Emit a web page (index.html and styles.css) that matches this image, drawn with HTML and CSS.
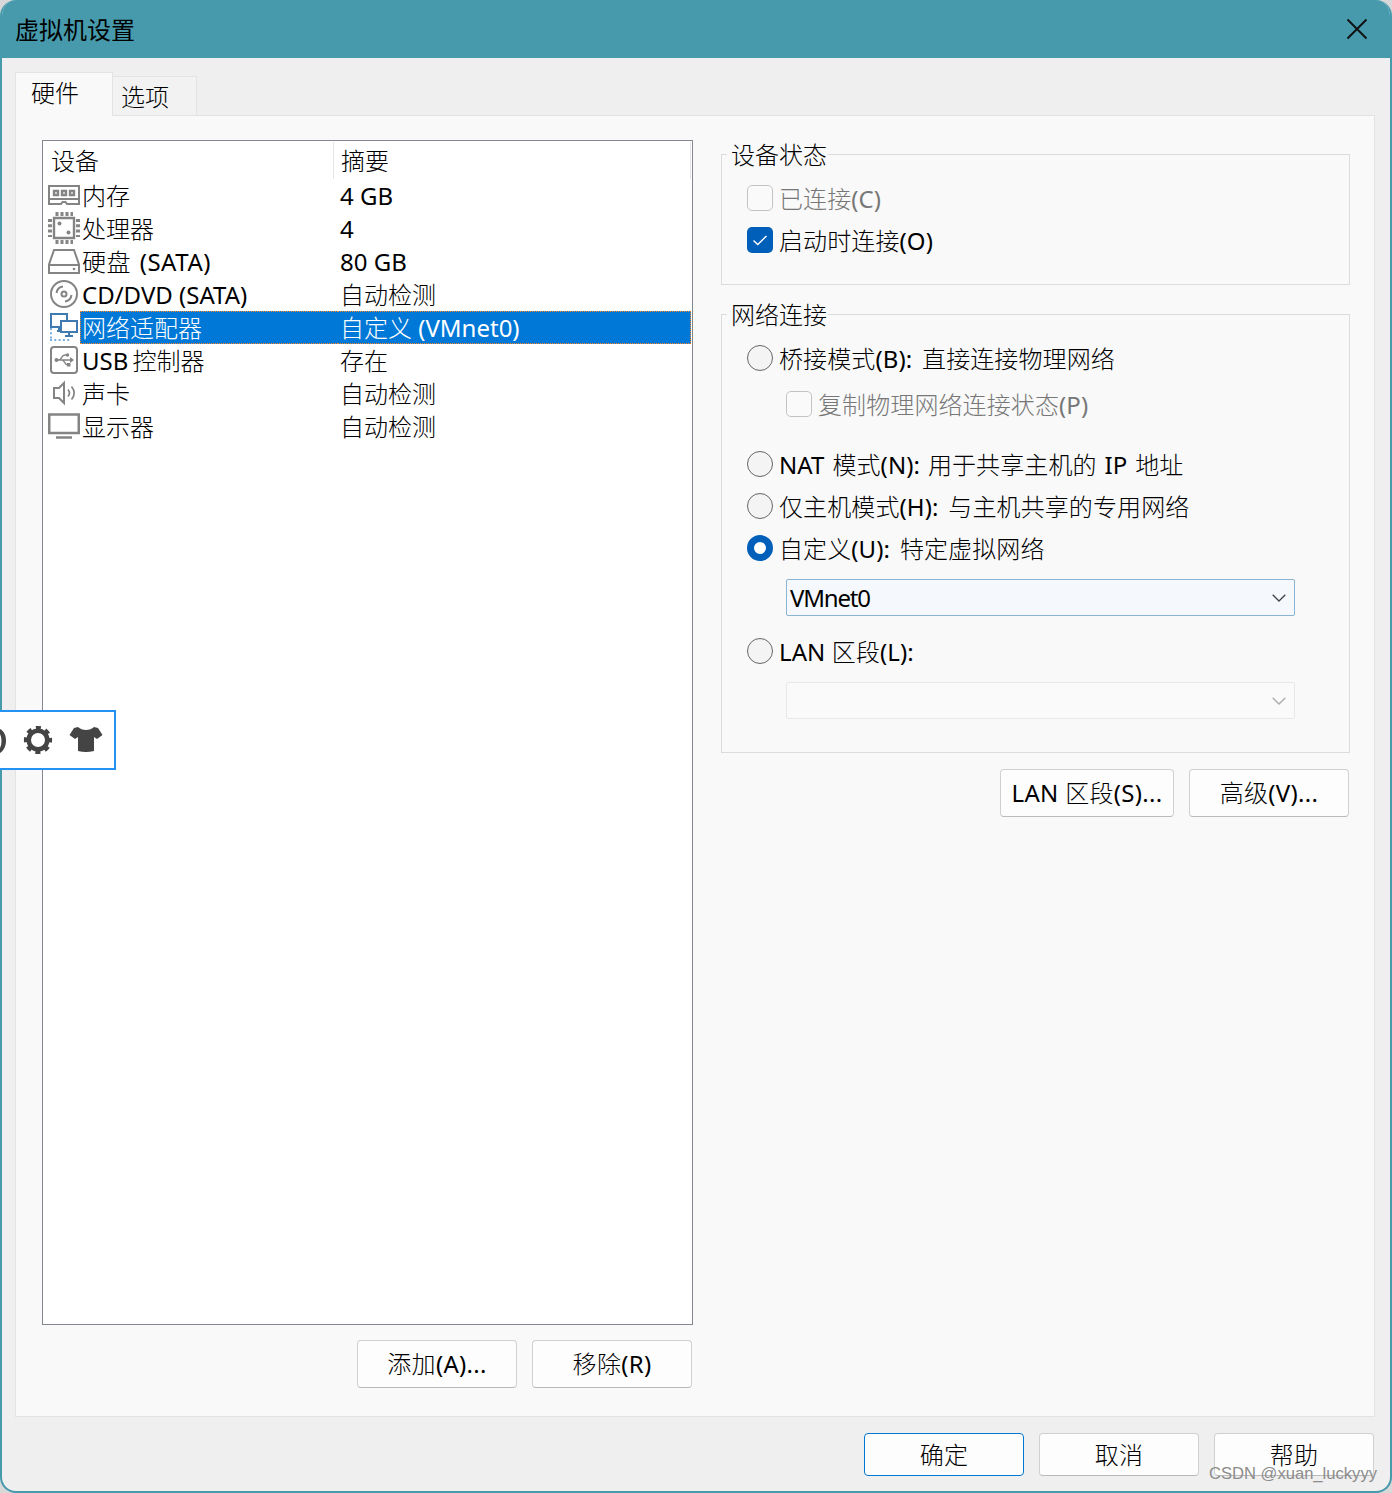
FILE: index.html
```
<!DOCTYPE html>
<html lang="zh-CN">
<head>
  <meta charset="UTF-8" />
  <meta name="viewport" content="width=device-width, initial-scale=1.0"/>
  <title>虚拟机设置</title>
  <link rel="stylesheet" href="styles.css">
</head>
<body>

  <div class="window">
    <!-- Title bar -->
    <header class="titlebar">
      <h1>虚拟机设置</h1>
      <svg class="close" width="22" height="22" viewBox="0 0 22 22"><path d="M1.500 1.500l19 19M20.500 1.500l-19 19" fill="none" stroke="#111" stroke-width="1.9"/></svg>
    </header>

    <div class="content">
      <nav class="tabs">
        <div class="tab active">硬件</div>
        <div class="tab">选项</div>
      </nav>

      <main class="panel">
        <!-- Device list -->
        <section class="devices">
          <div class="list">
            <div class="list-head">
              <span class="head-name">设备</span>
              <span class="head-info">摘要</span>
            </div>
            <div class="row">
              <svg class="icon" viewBox="0 0 32 32"><g fill="none" stroke="#848484" stroke-width="2"><path d="M1 7h30v18H19l-1.500-2h-3L13 25H1zM1 20h30"/><path stroke-width="2.400" d="M6 12h4v4H6zM14 12h4v4h-4zM22 12h4v4h-4z"/></g></svg>
              <span class="name">内存</span><span class="info">4 GB</span>
            </div>
            <div class="row">
              <svg class="icon" viewBox="0 0 32 32"><g fill="none" stroke="#848484"><path stroke-width="2.400" d="M6 6h20v20H6z"/><path stroke-width="4" stroke-dasharray="3 2" d="M7.500 2H25M7.500 30H25"/><path stroke-width="4" stroke-dasharray="3 2.300" d="M2 7v18M30 7v18"/></g><circle cx="11.500" cy="11.500" r="2" fill="#848484"/><circle cx="20.500" cy="20.500" r="2" fill="#848484"/></svg>
              <span class="name">处理器</span><span class="info">4</span>
            </div>
            <div class="row">
              <svg class="icon" viewBox="0 0 32 32"><path fill="none" stroke="#848484" stroke-width="2" d="M6 5h20l5 14.500V28H1v-8.500zM1 20h30"/><circle cx="26" cy="24" r="1.300" fill="#848484"/></svg>
              <span class="name sata">硬盘 (SATA)</span><span class="info">80 GB</span>
            </div>
            <div class="row">
              <svg class="icon" viewBox="0 0 32 32"><g fill="none" stroke="#848484" stroke-width="2"><circle cx="16" cy="16" r="13"/><circle cx="16" cy="16" r="2.500"/><path d="M8.500 15c.5-3.500 3-6 6.500-6.500M23.500 17c-.5 3.500-3 6-6.500 6.500"/></g></svg>
              <span class="name">CD/DVD (SATA)</span><span class="info">自动检测</span>
            </div>
            <div class="row selected">
              <svg class="icon" viewBox="0 0 32 32"><g fill="none" stroke="#3f7bb0" stroke-width="2"><path d="M14 16H3V3h16v6M9 20h4M11 16v4"/><path d="M13 10h16v11H13zM21 21v4M17 25h8"/></g><path fill="none" stroke="#78aedb" stroke-width="2" stroke-dasharray="2 2.300" d="M3 17v11.500M2 29h20"/></svg>
              <span class="name">网络适配器</span><span class="info">自定义 (VMnet0)</span>
            </div>
            <div class="row">
              <svg class="icon" viewBox="0 0 32 32"><g fill="none" stroke="#848484"><rect x="3" y="3" width="26" height="26" rx="3" stroke-width="2"/><path stroke-width="1.500" d="M8 16h16M11 16c3 0 2-5 6-5h2M14 16c3 0 2 5 6 5h1"/></g><g fill="#848484"><circle cx="8.500" cy="16" r="2"/><path d="M22 13l4 3-4 3z"/><circle cx="19.500" cy="11" r="1.700"/><path d="M19 19h3.500v3.500H19z"/></g></svg>
              <span class="name usb">USB 控制器</span><span class="info">存在</span>
            </div>
            <div class="row">
              <svg class="icon" viewBox="0 0 32 32"><g fill="none" stroke="#848484" stroke-width="2"><path d="M6 11h5l5-5v20l-5-5H6z"/><path stroke-width="1.700" d="M20 12.500c1.700 2 1.700 5 0 7M23.500 9.500c3.300 4 3.300 9 0 13"/></g></svg>
              <span class="name">声卡</span><span class="info">自动检测</span>
            </div>
            <div class="row">
              <svg class="icon" viewBox="0 0 32 32"><path fill="none" stroke="#848484" stroke-width="2.500" d="M1.250 4.500h29.500v18.500H1.250zM8 27.500h16"/></svg>
              <span class="name">显示器</span><span class="info">自动检测</span>
            </div>
          </div>
          <div class="buttons">
            <button class="btn">添加(A)...</button>
            <button class="btn">移除(R)</button>
          </div>
        </section>

        <!-- Settings of the selected device -->
        <section class="settings">
          <div class="group status">
            <h2>设备状态</h2>
            <div class="option disabled"><span class="check"></span>已连接(C)</div>
            <div class="option">
              <span class="check checked"><svg width="26" height="26" viewBox="0 0 26 26"><path d="M6.500 13.500l4.200 4L19.500 9" fill="none" stroke="#fff" stroke-width="1.400"/></svg></span>启动时连接(O)
            </div>
          </div>

          <div class="group network">
            <h2>网络连接</h2>
            <div class="option"><span class="radio"></span>桥接模式(B): 直接连接物理网络</div>
            <div class="option sub disabled"><span class="check"></span>复制物理网络连接状态(P)</div>
            <div class="option nat"><span class="radio"></span>NAT 模式(N): 用于共享主机的 IP 地址</div>
            <div class="option"><span class="radio"></span>仅主机模式(H): 与主机共享的专用网络</div>
            <div class="option"><span class="radio on"></span>自定义(U): 特定虚拟网络</div>
            <div class="combo">
              <span>VMnet0</span>
              <svg width="14" height="8" viewBox="0 0 14 8"><path d="M.7.700L7 7 13.300.700" fill="none" stroke="#444" stroke-width="1.300"/></svg>
            </div>
            <div class="option lan"><span class="radio"></span>LAN 区段(L):</div>
            <div class="combo off">
              <span></span>
              <svg width="14" height="8" viewBox="0 0 14 8"><path d="M.7.700L7 7 13.300.700" fill="none" stroke="#aaa" stroke-width="1.300"/></svg>
            </div>
          </div>

          <div class="buttons">
            <button class="btn wide">LAN 区段(S)...</button>
            <button class="btn">高级(V)...</button>
          </div>
        </section>
      </main>

      <footer class="footer">
        <button class="btn primary">确定</button>
        <button class="btn">取消</button>
        <button class="btn">帮助</button>
      </footer>
    </div>
  </div>

  <!-- Input method bar over the window -->
  <div class="ime">
    <svg width="116" height="60" viewBox="0 0 116 60">
      <path d="M0 19c8 4 8 19 0 24v-5c2-4 2-10 0-14z" fill="#444"/>
      <circle cx="38" cy="30" r="9.300" fill="none" stroke="#444" stroke-width="4.600"/>
      <circle cx="38" cy="30" r="12.300" fill="none" stroke="#444" stroke-width="3.600" stroke-dasharray="5 4.660" stroke-dashoffset="2.500"/>
      <path d="M78 17c4 4 12 4 16 0l4 1 4.500 7-5.500 4-3-2v14q-8 2-16 0V27l-3 2-5.500-4 4.500-7z" fill="#444"/>
    </svg>
  </div>

  <div class="watermark">CSDN @xuan_luckyyy</div>

</body>
</html>
```
FILE: styles.css
```
* { margin: 0; padding: 0; box-sizing: border-box; }
body {
  font-family: "Noto Sans", "Noto Sans CJK SC Light", "Noto Sans CJK SC", sans-serif;
  font-size: 24px;
  line-height: 33px;
  color: #000;
  background: #d8d8d8;
}
.window {
  display: flex;
  flex-direction: column;
  width: 1392px;
  height: 1493px;
  border: 2px solid #469aac;
  border-top: none;
  border-radius: 16px;
  background: #efefef;
  overflow: hidden;
}

/* Title bar */
.titlebar {
  display: flex;
  justify-content: space-between;
  align-items: center;
  height: 58px;
  margin: 0 -2px;
  padding: 0 24px 0 15px;
  background: #469aac;
}
.titlebar h1 {
  font-family: "Noto Sans CJK SC", sans-serif;
  font-size: 24px;
  font-weight: 400;
  padding-bottom: 1px;
}
.content {
  flex: 1;
  padding: 14px 15px 15px 13px;
}

/* Tabs */
.tabs {
  display: flex;
  align-items: flex-end;
  height: 44px;
}
.tab {
  width: 84px;
  height: 40px;
  padding: 3px 8px;
  border: 1px solid #e3e3e3;
  border-left: none;
  background: #f2f2f2;
}
.tab.active {
  position: relative;
  width: 98px;
  height: 44px;
  padding: 3px 15px;
  border-left: 1px solid #e3e3e3;
  border-bottom: none;
  background: #f9f9f9;
}
.panel {
  display: flex;
  gap: 28px;
  width: 1360px;
  height: 1302px;
  margin-top: -1px;
  padding: 24px 24px 0 26px;
  border: 1px solid #e3e3e3;
  background: #f9f9f9;
}

/* Device list */
.devices { width: 651px; }
.list {
  height: 1185px;
  border: 1px solid #828790;
  background: #fff;
}
.list-head {
  display: flex;
  height: 38px;
  padding: 1px 1px 0 0;
}
.head-name {
  width: 291px;
  padding: 2px 8px;
  border-right: 1px solid #e5e5e5;
}
.head-info {
  flex: 1;
  padding: 2px 7px;
  border-right: 1px solid #e5e5e5;
}
.row {
  display: flex;
  height: 33px;
  padding: 0 1px 0 5px;
  white-space: nowrap;
}
.icon {
  width: 32px;
  height: 32px;
}
.name {
  width: 258px;
  padding-left: 2px;
}
.name.sata { word-spacing: 2px; letter-spacing: 0.5px; }
.name.usb { word-spacing: -2px; }
.info {
  flex: 1;
  padding-left: 2px;
}
.selected .name, .selected .info {
  color: #fff;
  background: #0078d7;
  border-top: 1px dotted #ff8728;
  border-bottom: 1px dotted #ff8728;
  line-height: 31px;
}
.selected .name { border-left: 1px dotted #ff8728; padding-left: 1px; }
.selected .info { border-right: 1px dotted #ff8728; }

/* Buttons */
.buttons {
  display: flex;
  justify-content: flex-end;
  gap: 15px;
  margin-top: 15px;
  padding-right: 1px;
}
.settings .buttons { margin-top: 16px; }
.btn {
  width: 160px;
  height: 48px;
  padding-bottom: 1px;
  border: 1px solid #d0d0d0;
  border-bottom-color: #bababa;
  border-radius: 4px;
  background: #fdfdfd;
  font: inherit;
  letter-spacing: 0.3px;
  color: #000;
}
.btn.wide { width: 174px; }
.btn.primary { border-color: #0078d4; }

/* Settings */
.settings { width: 629px; }
.group {
  border: 1px solid #dcdcdc;
  padding: 0 25px;
}
.group h2 {
  width: 101px;
  height: 30px;
  margin: -17px 0 0 -20px;
  padding-left: 4px;
  font-size: 24px;
  font-weight: 400;
  background: #f9f9f9;
}
.status {
  height: 131px;
  margin-top: 14px;
}
.status h2 { margin-bottom: 10px; }
.network {
  height: 439px;
  margin-top: 29px;
}
.network h2 { margin-bottom: 10px; }
.option {
  display: flex;
  align-items: center;
  gap: 6px;
  height: 42px;
  padding-bottom: 2px;
  word-spacing: 3.5px;
  letter-spacing: 0.1px;
  white-space: nowrap;
}
.option.nat { word-spacing: 1.5px; }
.option.sub {
  height: 50px;
  margin-bottom: 14px;
  padding-left: 39px;
}
.disabled { color: #777; }
.check, .radio {
  width: 26px;
  height: 26px;
  border: 1.5px solid #666;
  background: #f4f4f4;
}
.check {
  border-radius: 5px;
  border-color: #c3c3c3;
  background: #fafafa;
}
.check.checked {
  border: none;
  background: #005fb8;
}
.check svg { display: block; }
.radio { border-radius: 50%; }
.radio.on {
  border: 7px solid #005fb8;
  background: #fff;
}
.combo {
  display: flex;
  align-items: center;
  justify-content: space-between;
  width: 509px;
  height: 37px;
  margin: 9px 0 0 39px;
  padding: 0 8px 0 3px;
  border: 1px solid #8ab4d4;
  border-radius: 2px;
  background: #f5f9fd;
  letter-spacing: -1.2px;
}
.option.lan {
  margin-top: 15px;
  word-spacing: 0;
}
.combo.off {
  border-color: #e8e8e8;
  background: #fafafa;
}

.footer {
  display: flex;
  justify-content: flex-end;
  gap: 15px;
  margin-top: 16px;
  padding-right: 1px;
}
.footer .btn { height: 43px; padding-bottom: 0; }

/* Overlays */
.ime {
  position: absolute;
  left: 0;
  top: 710px;
  width: 116px;
  height: 60px;
  background: #fff;
  border: 2px solid #2492f2;
  border-left: none;
}
.ime svg { display: block; margin-top: -2px; }
.watermark {
  position: absolute;
  right: 15px;
  top: 1463px;
  font-family: "Liberation Sans", sans-serif;
  font-size: 16.6px;
  line-height: 22px;
  color: #8c8c8c;
}
```
